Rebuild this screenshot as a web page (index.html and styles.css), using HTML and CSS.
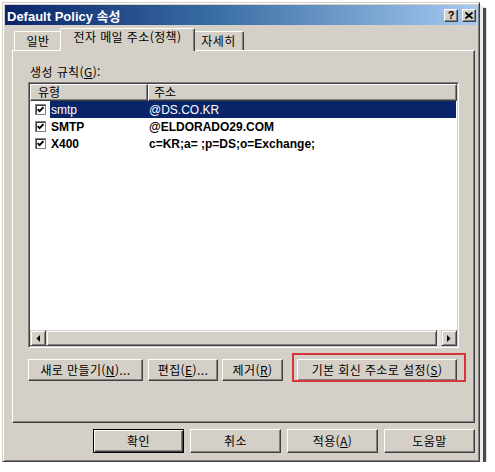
FILE: index.html
```html
<!DOCTYPE html>
<html lang="ko">
<head>
    <meta charset="UTF-8">
    <meta name="viewport" content="width=device-width, initial-scale=1.0">
    <title>Default Policy 속성</title>
    <link rel="stylesheet" href="styles.css">
</head>
<body>
    <div class="window">
        <div class="titlebar">
            <span class="title">Default Policy 속성</span>
            <span class="cap-btn">?</span>
            <span class="cap-btn">
                <svg width="8" height="7" viewBox="0 0 8 7"><path d="M0.5 0.5 L7.5 6.5 M7.5 0.5 L0.5 6.5" stroke="#000" stroke-width="1.8"/></svg>
            </span>
        </div>

        <div class="body">
            <div class="tabs">
                <div class="tab tab-general">일반</div>
                <div class="tab tab-email active">전자 메일 주소(정책)</div>
                <div class="tab tab-detail">자세히</div>
            </div>

            <div class="panel">
                <div class="label">생성 규칙(<u>G</u>):</div>

                <div class="listview">
                    <div class="lv-header">
                        <div class="col col-type">유형</div>
                        <div class="col col-addr">주소</div>
                    </div>
                    <div class="lv-rows">
                        <div class="row selected">
                            <span class="check"><svg width="7" height="7" viewBox="0 0 7 7"><path d="M0.6 3.2 L2.6 5.2 L6.4 1.2" stroke="#000" stroke-width="1.8" fill="none"/></svg></span>
                            <div class="row-text">
                                <span class="cell-type">smtp</span>
                                <span class="cell-addr">@DS.CO.KR</span>
                            </div>
                        </div>
                        <div class="row">
                            <span class="check"><svg width="7" height="7" viewBox="0 0 7 7"><path d="M0.6 3.2 L2.6 5.2 L6.4 1.2" stroke="#000" stroke-width="1.8" fill="none"/></svg></span>
                            <div class="row-text">
                                <span class="cell-type">SMTP</span>
                                <span class="cell-addr">@ELDORADO29.COM</span>
                            </div>
                        </div>
                        <div class="row">
                            <span class="check"><svg width="7" height="7" viewBox="0 0 7 7"><path d="M0.6 3.2 L2.6 5.2 L6.4 1.2" stroke="#000" stroke-width="1.8" fill="none"/></svg></span>
                            <div class="row-text">
                                <span class="cell-type">X400</span>
                                <span class="cell-addr">c=KR;a= ;p=DS;o=Exchange;</span>
                            </div>
                        </div>
                    </div>
                    <div class="hscroll">
                        <span class="sb-btn"><svg width="4" height="7" viewBox="0 0 4 7"><polygon points="4,0 4,7 0.5,3.5" fill="#000"/></svg></span>
                        <span class="sb-thumb"></span>
                        <span class="sb-btn"><svg width="4" height="7" viewBox="0 0 4 7"><polygon points="0,0 0,7 3.5,3.5" fill="#000"/></svg></span>
                    </div>
                </div>

                <div class="actions">
                    <button class="btn btn-new">새로 만들기(<u>N</u>)...</button>
                    <button class="btn btn-edit">편집(<u>E</u>)...</button>
                    <button class="btn btn-remove">제거(<u>R</u>)</button>
                    <div class="highlight">
                        <button class="btn btn-default-reply">기본 회신 주소로 설정(<u>S</u>)</button>
                    </div>
                </div>
            </div>

            <div class="dialog-buttons">
                <button class="btn btn-dialog default">확인</button>
                <button class="btn btn-dialog">취소</button>
                <button class="btn btn-dialog">적용(<u>A</u>)</button>
                <button class="btn btn-dialog">도움말</button>
            </div>
        </div>
    </div>
</body>
</html>
```

FILE: styles.css
```css
* {
    box-sizing: border-box;
}

body {
    margin: 0;
    background-color: #fff;
    font-family: "Liberation Sans", "Noto Sans CJK KR", sans-serif;
    font-size: 12px;
    color: #000;
}

u {
    text-decoration: underline;
    text-underline-offset: 1px;
}

/* window frame */
.window {
    width: 478px;
    height: 460px;
    margin: 2px 0 0 2px;
    padding: 2px;
    display: flex;
    flex-direction: column;
    background-color: #d4d0c8;
    border: 1px solid;
    border-color: #d4d0c8 #404040 #404040 #d4d0c8;
    box-shadow: inset 1px 1px 0 #fff, inset -1px -1px 0 #808080, 3px 3px 0 #ececec, 6px 6px 1px #4a4a4a;
}

.titlebar {
    height: 20px;
    display: flex;
    align-items: center;
    padding: 0 1px 0 2px;
    background: linear-gradient(to right, #0a246a, #3a6ea5 45%, #a6caf0);
    color: #fff;
    font-weight: bold;
    font-size: 13px;
}

.title {
    flex: 1;
}

.cap-btn {
    width: 14px;
    height: 13px;
    display: flex;
    align-items: center;
    justify-content: center;
    background-color: #d4d0c8;
    border: 1px solid;
    border-color: #fff #404040 #404040 #fff;
    box-shadow: inset -1px -1px 0 #808080;
    color: #000;
    font-size: 11px;
    line-height: 11px;
}

.cap-btn + .cap-btn {
    margin-left: 4px;
}

.body {
    flex: 1;
    display: flex;
    flex-direction: column;
    padding: 3px 2px 6px 7px;
}

/* tabs */
.tabs {
    height: 22px;
    display: flex;
    align-items: flex-end;
    padding-left: 2px;
}

.tab {
    height: 19px;
    padding-top: 1px;
    text-align: center;
    font-family: "Noto Sans CJK KR", sans-serif;
    font-size: 12px;
    line-height: 16px;
    letter-spacing: 0.4px;
    background-color: #d4d0c8;
    border: 1px solid;
    border-bottom: none;
    border-color: #fff #404040 transparent #fff;
    border-radius: 2px 2px 0 0;
    box-shadow: inset -1px 0 0 #808080;
}

.tab-general {
    width: 48px;
}

.tab-email {
    width: 135px;
}

.tab-detail {
    width: 51px;
}

.tab.active {
    height: 23px;
    margin: 0 -2px -1px;
    padding-top: 0;
    position: relative;
    z-index: 1;
}

/* tab page */
.panel {
    height: 373px;
    display: flex;
    flex-direction: column;
    padding: 13px 15px 0 15px;
    border: 1px solid;
    border-color: #fff #404040 #404040 #fff;
    box-shadow: inset -1px -1px 0 #808080;
}

.label {
    height: 16px;
    margin-left: 2px;
    font-family: "Noto Sans CJK KR", sans-serif;
    line-height: 16px;
    letter-spacing: 0.4px;
}

.listview {
    height: 266px;
    margin-top: 2px;
    padding: 1px;
    display: flex;
    flex-direction: column;
    background-color: #fff;
    border: 1px solid;
    border-color: #808080 #fff #fff #808080;
    box-shadow: inset 1px 1px 0 #404040, inset -1px -1px 0 #d4d0c8;
}

.lv-header {
    height: 17px;
    display: flex;
}

.col {
    padding-left: 7px;
    font-family: "Noto Sans CJK KR", sans-serif;
    line-height: 14px;
    background-color: #d4d0c8;
    border: 1px solid;
    border-color: #fff #404040 #404040 #fff;
    box-shadow: inset -1px -1px 0 #808080;
}

.col-type {
    width: 118px;
}

.col-addr {
    flex: 1;
    padding-left: 5px;
}

.lv-rows {
    flex: 1;
}

.row {
    height: 17px;
    display: flex;
    align-items: center;
}

.check {
    width: 11px;
    height: 11px;
    margin-left: 5px;
    display: flex;
    align-items: center;
    justify-content: center;
    background-color: #fff;
    border: 1px solid #808080;
    box-shadow: inset 1px 1px 0 #404040;
}

.row-text {
    flex: 1;
    height: 17px;
    margin-left: 4px;
    display: flex;
    align-items: center;
    font-weight: bold;
}

.row.selected .row-text {
    background-color: #0a246a;
    color: #fff;
    font-weight: normal;
    margin-right: 1px;
}

.cell-type {
    width: 99px;
    padding-left: 1px;
}

.hscroll {
    height: 16px;
    display: flex;
    background-color: #e9e7e3;
}

.sb-btn {
    width: 16px;
    height: 16px;
    display: flex;
    align-items: center;
    justify-content: center;
    background-color: #d4d0c8;
    border: 1px solid;
    border-color: #d4d0c8 #404040 #404040 #d4d0c8;
    box-shadow: inset 1px 1px 0 #fff, inset -1px -1px 0 #808080;
}

.sb-thumb {
    flex: 1;
    margin-right: 4px;
    background-color: #d4d0c8;
    border: 1px solid;
    border-color: #d4d0c8 #404040 #404040 #d4d0c8;
    box-shadow: inset 1px 1px 0 #fff, inset -1px -1px 0 #808080;
}

/* buttons */
.btn {
    height: 22px;
    padding: 0;
    font-family: "Noto Sans CJK KR", sans-serif;
    font-size: 12px;
    line-height: 18px;
    letter-spacing: 0.4px;
    color: #000;
    background-color: #d4d0c8;
    border: 1px solid;
    border-color: #fff #404040 #404040 #fff;
    border-radius: 0;
    box-shadow: inset -1px -1px 0 #808080;
}

.actions {
    margin-top: 11px;
    display: flex;
    align-items: flex-start;
}

.btn-new {
    width: 115px;
}

.btn-edit {
    width: 70px;
    margin-left: 5px;
}

.btn-remove {
    width: 61px;
    margin-left: 4px;
}

.highlight {
    margin-left: 14px;
    position: relative;
}

.highlight::after {
    content: "";
    position: absolute;
    left: -5px;
    right: -9px;
    top: -6px;
    bottom: -1px;
    border: 2px solid #d8343a;
}

.btn-default-reply {
    width: 160px;
    display: block;
}

.dialog-buttons {
    margin-top: 6px;
    display: flex;
    justify-content: flex-end;
    gap: 6px;
}

.btn-dialog {
    width: 91px;
    height: 24px;
}

.btn-dialog.default {
    border-color: #000;
    box-shadow: inset 1px 1px 0 #fff, inset -1px -1px 0 #404040, inset -2px -2px 0 #808080;
}
```
